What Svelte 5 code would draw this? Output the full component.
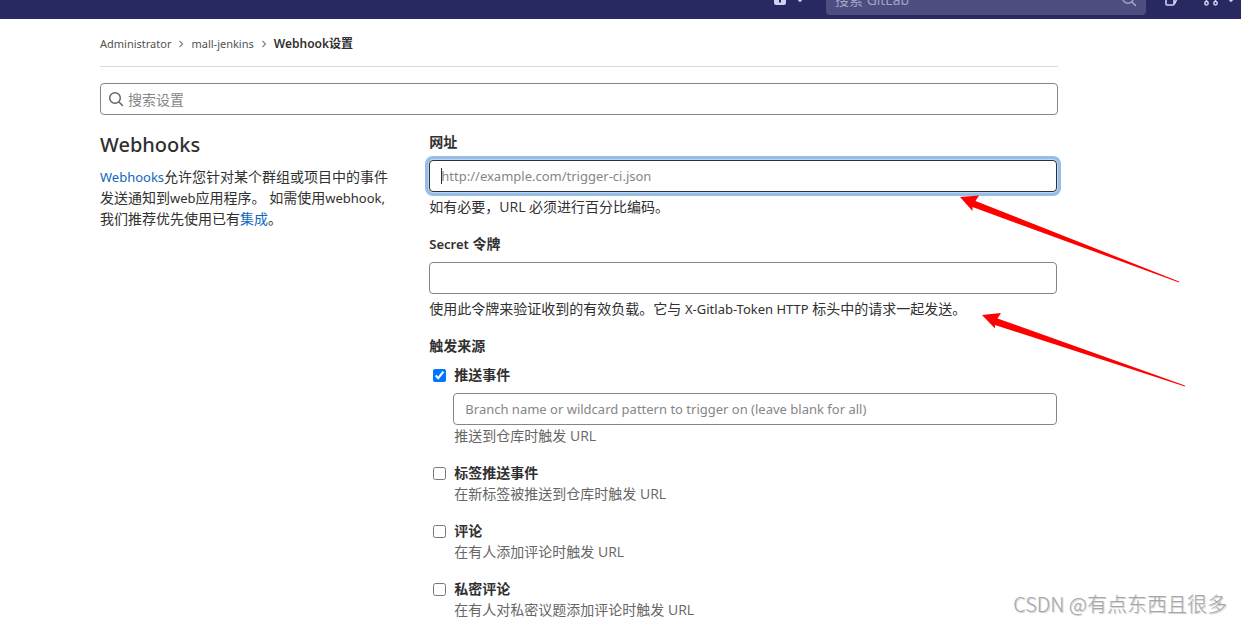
<script>
  let search = $state('');
  let url = $state('');
  let token = $state('');
  let branch = $state('');

  let triggers = $state([
    { id: 'push', title: '推送事件', help: '推送到仓库时触发 URL', checked: true, branch: true },
    { id: 'tag-push', title: '标签推送事件', help: '在新标签被推送到仓库时触发 URL', checked: false },
    { id: 'note', title: '评论', help: '在有人添加评论时触发 URL', checked: false },
    { id: 'confidential-note', title: '私密评论', help: '在有人对私密议题添加评论时触发 URL', checked: false },
  ]);
</script>

{#snippet magnifier()}
  <svg class="icon" viewBox="0 0 16 16" aria-hidden="true">
    <circle cx="7" cy="7" r="5.3" fill="none" stroke="currentColor" stroke-width="1.5" />
    <path d="M11 11l3.5 3.5" fill="none" stroke="currentColor" stroke-width="1.5" stroke-linecap="round" />
  </svg>
{/snippet}

<header class="navbar">
  <div class="navbar-inner">
    <button class="nav-btn" aria-label="New">
      <svg class="icon" viewBox="0 0 16 16">
        <path fill="currentColor" fill-rule="evenodd" d="M4 2h8a2 2 0 0 1 2 2v8a2 2 0 0 1-2 2H4a2 2 0 0 1-2-2V4a2 2 0 0 1 2-2zm3 3v2H5v2h2v2.5h2V9h2V7H9V5z" />
      </svg>
      <svg class="caret" viewBox="0 0 8 8"><path d="M1 3l3 3 3-3" fill="none" stroke="currentColor" stroke-width="1.8" /></svg>
    </button>
    <label class="nav-search">
      <input type="text" placeholder="搜索 GitLab" aria-label="搜索 GitLab" />
      {@render magnifier()}
    </label>
    <button class="nav-btn issues" aria-label="Issues">
      <svg class="icon" viewBox="0 0 16 16">
        <path fill="none" stroke="currentColor" stroke-width="1.6" stroke-linejoin="round" d="M3 2h8v11a1 1 0 0 1-1 1H4a1 1 0 0 1-1-1zM11 4l4 1.5L11.5 13" />
      </svg>
    </button>
    <button class="nav-btn merges" aria-label="Merge requests">
      <svg class="icon" viewBox="0 0 16 16">
        <g fill="none" stroke="currentColor" stroke-width="1.5">
          <circle cx="3.5" cy="12.3" r="1.7" />
          <circle cx="12.5" cy="12.3" r="1.7" />
          <path d="M3.5 10.5V3M12.5 10.5V5a2 2 0 0 0-2-2H8" />
        </g>
      </svg>
      <svg class="caret" viewBox="0 0 8 8"><path d="M1 3l3 3 3-3" fill="none" stroke="currentColor" stroke-width="1.8" /></svg>
    </button>
  </div>
</header>

<main class="content">
  <nav class="breadcrumbs" aria-label="Breadcrumbs">
    <a href="#administrator">Administrator</a>
    <svg class="sep" viewBox="0 0 8 8"><path d="M2.5 1l3 3-3 3" fill="none" stroke="currentColor" stroke-width="1.2" /></svg>
    <a href="#mall-jenkins">mall-jenkins</a>
    <svg class="sep" viewBox="0 0 8 8"><path d="M2.5 1l3 3-3 3" fill="none" stroke="currentColor" stroke-width="1.2" /></svg>
    <a class="current" href="#webhooks">Webhook设置</a>
  </nav>

  <label class="settings-search">
    {@render magnifier()}
    <input type="text" placeholder="搜索设置" aria-label="搜索设置" bind:value={search} />
  </label>

  <div class="row">
    <section class="intro">
      <h4>Webhooks</h4>
      <p><a class="latin" href="#docs">Webhooks</a>允许您针对某个群组或项目中的事件发送通知到<span class="latin">web</span>应用程序。 如需使用<span class="latin">webhook,</span>我们推荐优先使用已有<a href="#integrations">集成</a>。</p>
    </section>

    <form class="hook-form">
      <div class="group">
        <label for="hook-url">网址</label>
        <div class="control-wrap">
          <input id="hook-url" class="control active" type="text" placeholder="http://example.com/trigger-ci.json" bind:value={url} />
          {#if !url}<span class="text-cursor"></span>{/if}
        </div>
        <p>如有必要，URL 必须进行百分比编码。</p>
      </div>

      <div class="group">
        <label for="hook-token"><span class="latin">Secret</span> 令牌</label>
        <input id="hook-token" class="control" type="password" bind:value={token} />
        <p>使用此令牌来验证收到的有效负载。它与 <span class="latin">X-Gitlab-Token HTTP</span> 标头中的请求一起发送。</p>
      </div>

      <fieldset>
        <legend>触发来源</legend>
        {#each triggers as trigger (trigger.id)}
          <div class="trigger">
            <div class="check">
              <input id={trigger.id} type="checkbox" bind:checked={trigger.checked} />
              <label for={trigger.id}>{trigger.title}</label>
            </div>
            {#if trigger.branch}
              <input
                class="control branch"
                type="text"
                placeholder="Branch name or wildcard pattern to trigger on (leave blank for all)"
                aria-label="Branch name"
                bind:value={branch}
              />
            {/if}
            <p>{trigger.help}</p>
          </div>
        {/each}
      </fieldset>
    </form>
  </div>
</main>

<!-- Annotations drawn over the page -->
<svg class="arrows" width="240" height="200" viewBox="0 0 240 200" aria-hidden="true">
  <path fill="#f00" d="M0 7l19-1.5-3.5 5.5L219 91.5v1L12.500 17v4z" />
  <path fill="#f00" d="M22 125l19-2-3.5 5.5L225 195.5v1L35 135v3.500z" />
</svg>

<div class="watermark">CSDN @有点东西且很多</div>

<style>
  :global(body) {
    margin: 0;
    background: #fff;
    color: #303030;
    font: 14px/21px 'Open Sans', 'Noto Sans CJK SC', sans-serif;
    overflow: hidden;
  }

  input,
  button {
    font: inherit;
    box-sizing: border-box;
  }

  p {
    margin: 0;
  }

  a {
    color: #1068bf;
    text-decoration: none;
  }

  .latin {
    font-family: 'Noto Sans', sans-serif;
    font-size: 13px;
    line-height: 1;
  }

  .icon {
    width: 16px;
    height: 16px;
    flex-shrink: 0;
  }

  .navbar {
    display: flex;
    align-items: flex-end;
    height: 19px;
    overflow: hidden;
    background: #292961;
    color: #d1d1f0;
  }

  .navbar-inner {
    display: flex;
    align-items: center;
    justify-content: flex-end;
    width: 100%;
    height: 40px;
    flex-shrink: 0;
  }

  .nav-btn {
    display: flex;
    align-items: center;
    gap: 8px;
    padding: 0;
    border: 0;
    background: none;
    color: inherit;
  }

  .caret {
    width: 8px;
    height: 8px;
  }

  .nav-search {
    display: flex;
    align-items: center;
    box-sizing: border-box;
    width: 320px;
    height: 32px;
    margin: 0 17px 0 22px;
    padding: 0 9px;
    border-radius: 4px;
    background: #4d4d80;
  }

  .nav-search input {
    flex: 1;
    min-width: 0;
    padding: 0;
    border: 0;
    background: none;
    color: inherit;
    outline: none;
  }

  .nav-search input::placeholder {
    color: #a5a5ca;
  }

  .nav-search .icon {
    color: #a5a5ca;
  }

  .issues {
    margin-right: 24px;
  }

  .merges {
    margin-right: 6px;
  }

  .content {
    max-width: 958px;
    margin-left: 100px;
  }

  .breadcrumbs {
    display: flex;
    align-items: center;
    gap: 6px;
    box-sizing: border-box;
    height: 48px;
    padding-top: 2px;
    border-bottom: 1px solid #dbdbdb;
    font-family: 'Noto Sans', 'Noto Sans CJK SC', sans-serif;
    font-size: 11px;
  }

  .breadcrumbs a {
    color: #525252;
  }

  .breadcrumbs .current {
    color: #303030;
    font-size: 12px;
    font-weight: 600;
  }

  .sep {
    width: 8px;
    height: 8px;
    color: #868686;
  }

  .settings-search {
    display: flex;
    align-items: center;
    gap: 4px;
    box-sizing: border-box;
    height: 32px;
    margin: 16px 0;
    padding: 0 7px;
    border: 1px solid #868686;
    border-radius: 4px;
    color: #666;
  }

  .settings-search input {
    flex: 1;
    padding: 0;
    border: 0;
    outline: none;
  }

  input::placeholder {
    color: #868686;
    opacity: 1;
  }

  .row {
    display: grid;
    grid-template-columns: 1fr 2fr;
    margin: 0 -15px;
  }

  .intro,
  .hook-form {
    min-width: 0;
    padding: 0 15px;
  }

  .intro {
    padding-right: 24px;
  }

  .hook-form {
    padding-right: 16px;
  }

  h4 {
    margin: 0 0 8px;
    font-family: 'Noto Sans', sans-serif;
    font-size: 20px;
    font-weight: 500;
    line-height: 27px;
  }

  .group {
    margin-bottom: 16px;
  }

  .group > label,
  legend {
    display: block;
    margin-bottom: 8px;
    padding: 0;
    font-weight: 600;
  }

  .group p {
    margin-top: 4px;
  }

  .control {
    display: block;
    width: 100%;
    height: 32px;
    padding: 0 11px;
    border: 1px solid #868686;
    border-radius: 4px;
    background: #fff;
    color: #303030;
    font-family: 'Noto Sans', 'Noto Sans CJK SC', sans-serif;
    font-size: 13px;
    outline: none;
  }

  .control.active,
  .control:focus {
    border-color: #303030;
    box-shadow: 0 0 0 1px #bfd8f0, 0 0 0 4px #94bee8;
  }

  .control-wrap {
    position: relative;
  }

  .text-cursor {
    position: absolute;
    top: 8px;
    left: 12px;
    width: 1px;
    height: 16px;
    background: #303030;
    pointer-events: none;
  }

  fieldset {
    min-width: 0;
    margin: 0;
    padding: 0;
    border: 0;
  }

  .trigger {
    margin-bottom: 16px;
    padding-left: 24px;
  }

  .check {
    display: flex;
    align-items: center;
    gap: 8px;
    margin-left: -20px;
    font-weight: 600;
  }

  .check input {
    width: 13px;
    height: 13px;
    margin: 1px 0 0;
  }

  .branch {
    margin-top: 8px;
  }

  .trigger p {
    padding-left: 1px;
    color: #666;
  }

  .arrows {
    position: absolute;
    top: 190px;
    left: 960px;
    pointer-events: none;
  }

  .watermark {
    position: absolute;
    right: 14px;
    bottom: 8px;
    color: #a6a6a6;
    font-family: 'Noto Sans CJK SC', sans-serif;
    font-size: 20px;
    font-weight: 300;
    line-height: 24px;
    text-shadow: 1px 1px 1px #ccc;
    pointer-events: none;
  }
</style>
